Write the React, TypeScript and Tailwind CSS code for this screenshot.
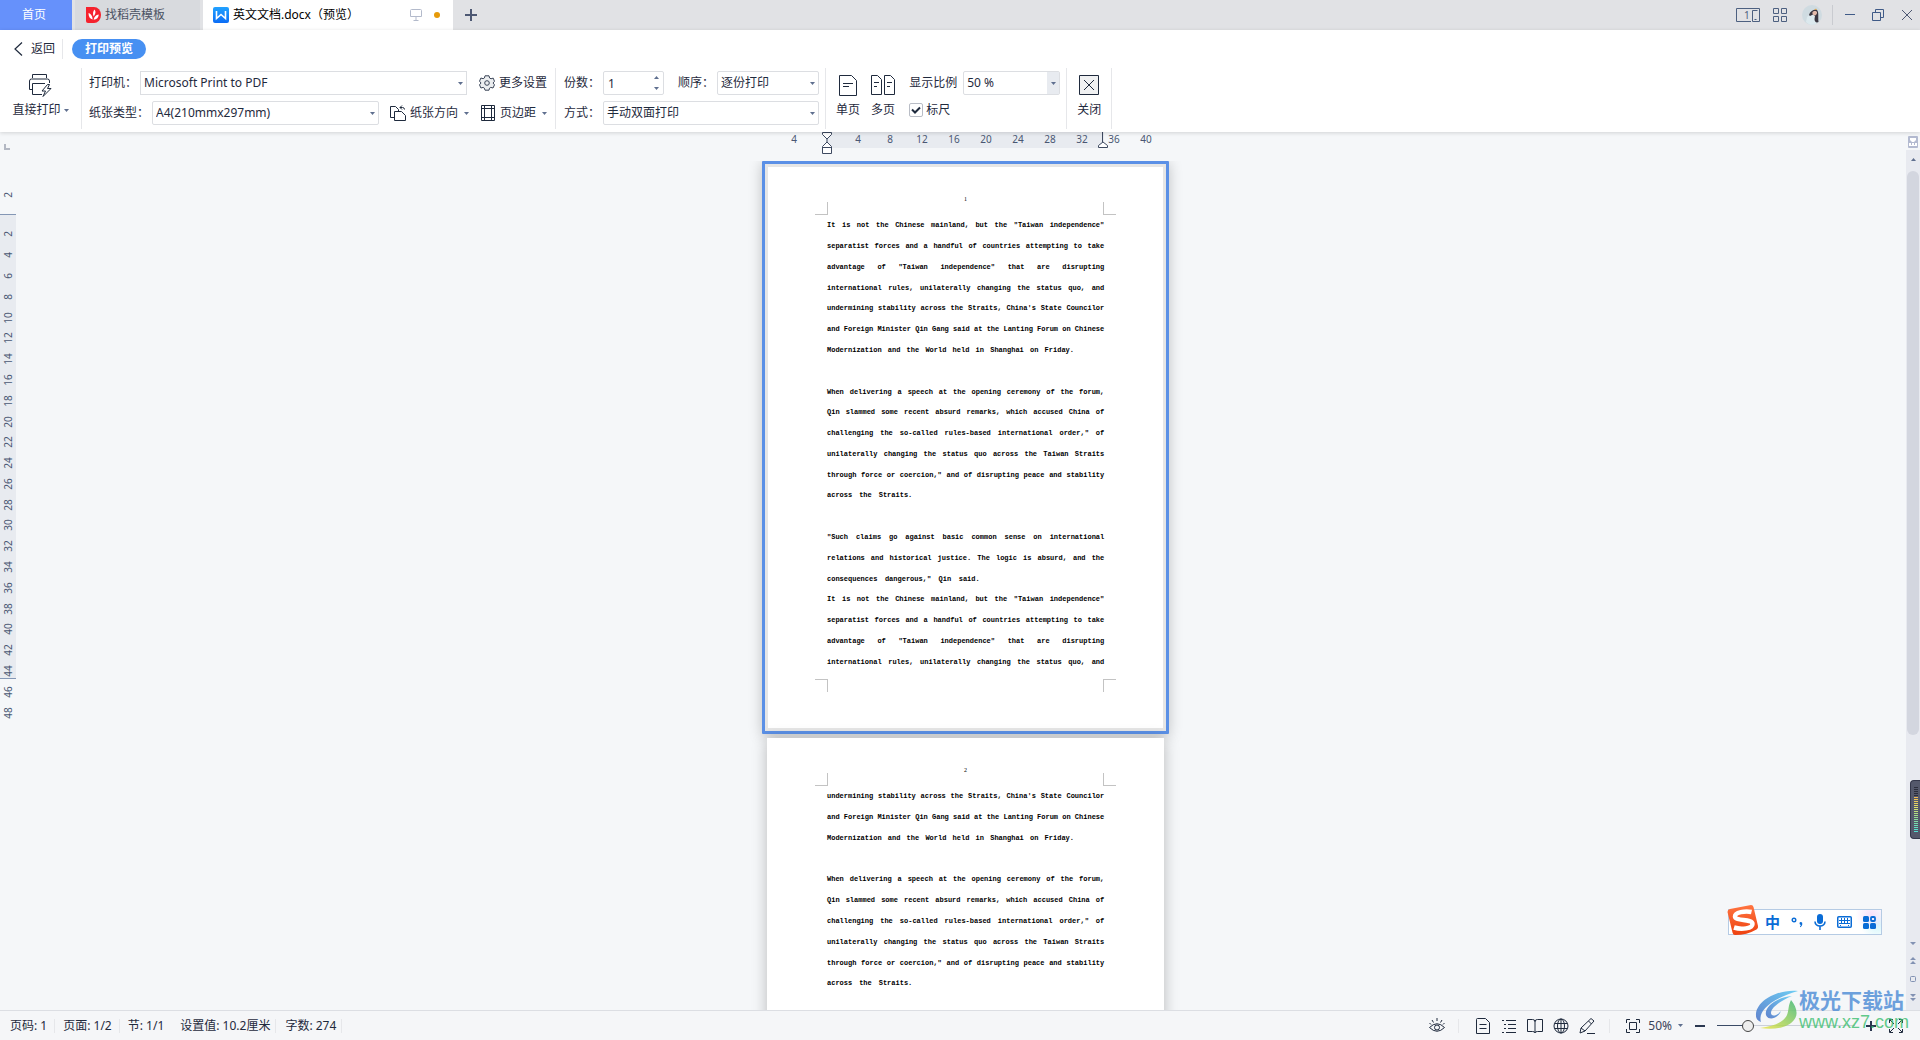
import { useState } from 'react';
import type { ReactNode } from 'react';
import clsx from 'clsx';

interface Line {
  text: string;
  last?: boolean;
}

const PARAGRAPH_ONE: Line[] = [
  { text: 'It is not the Chinese mainland, but the "Taiwan independence"' },
  { text: 'separatist forces and a handful of countries attempting to take' },
  { text: 'advantage of "Taiwan independence" that are disrupting' },
  { text: 'international rules, unilaterally changing the status quo, and' },
  { text: "undermining stability across the Straits, China's State Councilor" },
  { text: 'and Foreign Minister Qin Gang said at the Lanting Forum on Chinese' },
  { text: 'Modernization and the World held in Shanghai on Friday.', last: true },
];

const PARAGRAPH_TWO: Line[] = [
  { text: 'When delivering a speech at the opening ceremony of the forum,' },
  { text: 'Qin slammed some recent absurd remarks, which accused China of' },
  { text: 'challenging the so-called rules-based international order," of' },
  { text: 'unilaterally changing the status quo across the Taiwan Straits' },
  { text: 'through force or coercion," and of disrupting peace and stability' },
  { text: 'across the Straits.', last: true },
];

const PARAGRAPH_THREE: Line[] = [
  { text: '"Such claims go against basic common sense on international' },
  { text: 'relations and historical justice. The logic is absurd, and the' },
  { text: 'consequences dangerous," Qin said.', last: true },
];

const BLANK: Line = { text: '' };

const PAGE_ONE: Line[] = [
  ...PARAGRAPH_ONE,
  BLANK,
  ...PARAGRAPH_TWO,
  BLANK,
  ...PARAGRAPH_THREE,
  ...PARAGRAPH_ONE.slice(0, 4),
];

const PAGE_TWO: Line[] = [...PARAGRAPH_ONE.slice(4), BLANK, ...PARAGRAPH_TWO];

const TOP_MARKS = ['4', '', '4', '8', '12', '16', '20', '24', '28', '32', '36', '40'];
const SIDE_MARKS = Array.from({ length: 24 }, (_, i) => (i + 1) * 2);

function Caret({ className }: { className?: string }): JSX.Element {
  return (
    <svg viewBox="0 0 5 3" className={clsx('h-[3px] w-[5px] shrink-0 fill-[#5f6f8f]', className)}>
      <path d="M0 0h5L2.500 3z" />
    </svg>
  );
}

function Divider({ className }: { className?: string }): JSX.Element {
  return <div className={clsx('w-px shrink-0 bg-[#e6e7ea]', className)} />;
}

interface FieldProps {
  id: string;
  label: string;
  value: string;
  width: string;
  square?: boolean;
  shaded?: boolean;
  colon?: boolean;
}

function SelectField({ id, label, value, width, square, shaded, colon = true }: FieldProps): JSX.Element {
  return (
    <div className="flex items-center gap-[3px]">
      <label htmlFor={id} className={clsx('whitespace-nowrap', !colon && 'mr-[3px]')}>
        {label}
        {colon && '：'}
      </label>
      <div className={clsx('relative', width)}>
        <select
          id={id}
          defaultValue={value}
          className={clsx(
            'block h-6 w-full appearance-none border border-[#dcdee2] bg-white pr-4 pl-[3px] text-[#1f2a3d]',
            !square && 'rounded-xs',
          )}
        >
          <option>{value}</option>
        </select>
        <span
          className={clsx(
            'pointer-events-none absolute inset-y-px right-px flex w-3 items-center justify-center',
            shaded && 'bg-[#e8ebf0]',
          )}
        >
          <Caret />
        </span>
      </div>
    </div>
  );
}

function IconButton({ icon, label, caret }: { icon: ReactNode; label: string; caret?: boolean }): JSX.Element {
  return (
    <button type="button" className="flex h-6 items-center gap-1 whitespace-nowrap">
      {icon}
      {label}
      {caret && <Caret className="ml-[2px]" />}
    </button>
  );
}

function StackButton({ icon, label, caret }: { icon: ReactNode; label: string; caret?: boolean }): JSX.Element {
  return (
    <button type="button" className="flex flex-col items-center gap-[5px] whitespace-nowrap">
      <span className="flex h-6 items-center">{icon}</span>
      <span className="flex items-center gap-[3px] leading-4">
        {label}
        {caret && <Caret />}
      </span>
    </button>
  );
}

function TitleBar(): JSX.Element {
  return (
    <header className="flex h-[30px] shrink-0 items-stretch bg-[#e1e2e5]">
      <button type="button" className="w-[72px] bg-[#6691fb] pr-1 text-white">
        首页
      </button>
      <button type="button" className="ml-[3px] flex w-[125px] items-center gap-1 bg-[#d8dade] pl-[11px] text-[#4b5263]">
        <svg viewBox="0 0 15 16" className="h-4 w-[15px]">
          <path d="M0 0h8a7 8 0 0 1 0 16H2a2 2 0 0 1-2-2z" fill="#f5222d" />
          <path
            d="M8.500 2.500c2 2.500.5 5-.8 7C6.500 7 7 4 8.500 2.500zM2.500 6c2.400.5 4 3 4.200 6.500C4 12 2.500 9.500 2.500 6zM12.800 7.500c-.2 3-2 5-5.200 5.300.5-3 2.200-4.800 5.200-5.300z"
            fill="#fff"
          />
        </svg>
        找稻壳模板
      </button>
      <div className="ml-[3px] flex w-[250px] items-center bg-white pl-[10px] text-black">
        <svg viewBox="0 0 16 16" className="size-4">
          <defs>
            <linearGradient id="writer" x1="0" y1="0" x2="0" y2="1">
              <stop offset="0" stopColor="#22a2ff" />
              <stop offset="1" stopColor="#0b6cf5" />
            </linearGradient>
          </defs>
          <rect width="16" height="16" rx="2" fill="url(#writer)" />
          <path d="M3.500 4v7.500L8 7.500l4.500 4V4" fill="none" stroke="#fff" strokeWidth="1.600" />
        </svg>
        <span className="ml-1 flex-1 whitespace-nowrap">英文文档.docx（预览）</span>
        <svg viewBox="0 0 12 12" className="size-3 fill-none stroke-[#b3bacb]">
          <path d="M.5 1.500a1 1 0 0 1 1-1h9a1 1 0 0 1 1 1v6h-11zM6 8v3M3.500 11.500h5" />
        </svg>
        <span className="mr-[13px] ml-3 size-[6px] rounded-full bg-[#e69a09]" />
      </div>
      <button type="button" aria-label="新建标签" className="ml-3 flex items-center">
        <svg viewBox="0 0 12 12" className="size-3 stroke-[#4d5873] stroke-2">
          <path d="M6 0v12M0 6h12" />
        </svg>
      </button>
      <div className="ml-auto flex items-center pr-2">
        <button type="button" aria-label="窗口布局">
          <svg viewBox="0 0 24 14" className="h-[14px] w-6 fill-none stroke-[#4d6080]">
            <path d="M15 13.500H.5V.5h23v13h-7V2.500h5M18.500 11.500h2" />
            <text x="8" y="11" fill="#4d6080" stroke="none" fontSize="10">
              1
            </text>
          </svg>
        </button>
        <button type="button" aria-label="应用" className="ml-[13px]">
          <svg viewBox="0 0 14 14" className="size-[14px] fill-none stroke-[#4d6080]">
            <path d="M.5.5h5v5h-5zM8.500.5h5v5h-5zM.5 8.500h5v5h-5zM8.500 8.500h5v5h-5z" />
          </svg>
        </button>
        <button type="button" aria-label="账号" className="ml-[15px]">
          <svg viewBox="0 0 20 20" className="size-5">
            <circle cx="10" cy="10" r="10" fill="#cfdbe1" />
            <path d="M5 12c2-3 6-4 8-1l1 8c-3 1.500-7 1-10-2z" fill="#dce9ee" />
            <path d="M7 10c1-4 5-6 8-5 2 2 1 7 1.500 12-2 1-4 0-4-3l.5-3-2-1.500L8 11z" fill="#3a3640" />
            <path d="M10.500 7c1-1.500 4-1.500 4.500 0s-1 3.500-2.500 3.500S10 8.500 10.500 7z" fill="#e3b9a9" />
            <path d="M12 5l2-1.500L15 5z" fill="#d7a24f" />
          </svg>
        </button>
        <Divider className="ml-[10px] h-5 !bg-[#c9cbd0]" />
        <button type="button" aria-label="最小化" className="ml-3">
          <svg viewBox="0 0 10 10" className="size-[10px] stroke-[#3f5a87]">
            <path d="M0 4.500h10" />
          </svg>
        </button>
        <button type="button" aria-label="还原" className="ml-[17px]">
          <svg viewBox="0 0 12 12" className="size-3 fill-none stroke-[#3f5a87]">
            <path d="M.5 3.500h8v8h-8zM3.500 3V.5h8v8H9" />
          </svg>
        </button>
        <button type="button" aria-label="关闭窗口" className="ml-[18px]">
          <svg viewBox="0 0 10 10" className="size-[10px] stroke-[#4d5873]">
            <path d="M0 0l10 10M10 0L0 10" />
          </svg>
        </button>
      </div>
    </header>
  );
}

function Ribbon(): JSX.Element {
  const [copies, setCopies] = useState('1');
  const [ruler, setRuler] = useState(true);

  return (
    <div className="relative z-10 shrink-0 bg-white shadow-[0_1px_4px_rgba(0,0,0,0.15)]">
      <div className="flex h-[38px] items-center pl-[14px]">
        <button type="button" className="flex items-center gap-2">
          <svg viewBox="0 0 9 14" className="h-[14px] w-[9px] fill-none stroke-[#1f2a3d]">
            <path d="M8 .5L1 7l7 6.500" strokeWidth="1.200" />
          </svg>
          返回
        </button>
        <Divider className="mr-[9px] ml-[7px] h-5" />
        <button type="button" className="h-5 w-[74px] rounded-full bg-[#4790f2] font-bold text-white">
          打印预览
        </button>
      </div>

      <div className="flex h-16 items-stretch pb-[3px]">
        <div className="flex w-[81px] justify-center pt-[5px]">
          <StackButton
            caret
            label="直接打印"
            icon={
              <svg viewBox="0 0 24 24" className="size-6 fill-none stroke-[#1f2a3d]">
                <path d="M4.500 5V1.500h14V5M4 16.500H1.500V8a2 2 0 0 1 2-2h16a2 2 0 0 1 2 2v2M14 21.500H4.500v-11H17" />
                <path d="M19.500 11.500l-5.500 6.500h3.500l-2.500 5.500 8-8h-3.500l2-4z" />
              </svg>
            }
          />
        </div>
        <Divider />

        <div className="flex flex-col gap-[6px] pt-[3px] pr-2 pl-[7px]">
          <div className="flex items-center justify-between gap-3">
            <SelectField id="printer" label="打印机" value="Microsoft Print to PDF" width="w-[327px]" square />
            <IconButton
              label="更多设置"
              icon={
                <svg viewBox="0 0 16 16" className="size-4 fill-[#eceef0] stroke-[#3b4558]">
                  <path d="M6 .8h4l.6 2.200 1.400.8 2.200-.7 1.300 3.200L14 8l1.500 1.800-1.500 3.200-2.200-.6-1.300.8-.5 2H6l-.6-2-1.300-.8-2.200.6L.5 9.800 2 8 .5 6.200 1.900 3l2.200.7L5.400 3z" />
                  <circle cx="8" cy="8" r="2.300" />
                </svg>
              }
            />
          </div>
          <div className="flex items-center gap-[11px]">
            <SelectField id="paper" label="纸张类型" value="A4(210mmx297mm)" width="w-[227px]" />
            <IconButton
              caret
              label="纸张方向"
              icon={
                <svg viewBox="0 0 16 16" className="size-4 fill-none stroke-[#1f2a3d]">
                  <path d="M4.500 12.500h-4V1.500h5l3 3v2" />
                  <path d="M4.500 15.500v-9h7l4 4v5zM10 2.500h2.500a2 2 0 0 1 2 2M12 .5l-2 2 2 2" />
                </svg>
              }
            />
            <IconButton
              caret
              label="页边距"
              icon={
                <svg viewBox="0 0 16 16" className="size-4 fill-none stroke-[#1f2a3d]">
                  <path d="M1.500.5h13v15h-13zM4.500.5v15M11.500.5v15M1.500 3.500h13M1.500 12.500h13" />
                </svg>
              }
            />
          </div>
        </div>
        <Divider />

        <div className="flex flex-col gap-[6px] pt-[3px] pr-[6px] pl-2">
          <div className="flex items-center justify-between">
            <div className="flex items-center gap-[3px]">
              <label htmlFor="copies">份数：</label>
              <div className="relative w-[61px]">
                <input
                  id="copies"
                  value={copies}
                  onChange={(e) => setCopies(e.target.value)}
                  className="block h-6 w-full rounded-xs border border-[#dcdee2] pl-1 text-[#1f2a3d]"
                />
                <span className="absolute inset-y-[5px] right-[5px] flex flex-col justify-between">
                  <Caret className="rotate-180" />
                  <Caret />
                </span>
              </div>
            </div>
            <SelectField id="order" label="顺序" value="逐份打印" width="w-[102px]" />
          </div>
          <SelectField id="mode" label="方式" value="手动双面打印" width="w-[216px]" />
        </div>
        <Divider />

        <div className="flex gap-[11px] pt-[5px] pl-[10px]">
          <StackButton
            label="单页"
            icon={
              <svg viewBox="0 0 18 21" className="h-[21px] w-[18px] fill-none stroke-[#1f2a3d]">
                <path d="M.5.5h12l5 5v15H.5zM4 8.500h10M4 11.500h6" />
              </svg>
            }
          />
          <StackButton
            label="多页"
            icon={
              <svg viewBox="0 0 24 21" className="h-[21px] w-6 fill-none stroke-[#1f2a3d]">
                <path d="M.5.5h6l4 4v15H.5zM13.500.5h6l4 4v15h-10zM3 7.500h5M3 11.500h3M16 7.500h5M16 11.500h3" />
              </svg>
            }
          />
        </div>
        <div className="flex flex-col gap-[6px] pt-[3px] pr-[6px] pl-[14px]">
          <SelectField id="zoom" label="显示比例" value="50 %" width="w-[97px]" shaded colon={false} />
          <label className="flex h-[18px] items-center gap-[3px]">
            <span className="relative flex">
              <input
                type="checkbox"
                checked={ruler}
                onChange={(e) => setRuler(e.target.checked)}
                className="size-[14px] appearance-none rounded-xs border border-[#b9bdc6] bg-white"
              />
              {ruler && (
                <svg viewBox="0 0 14 14" className="pointer-events-none absolute inset-0 size-[14px] fill-none stroke-[#1f2a3d] stroke-2">
                  <path d="M3 6.500l3 3L11 4.500" />
                </svg>
              )}
            </span>
            标尺
          </label>
        </div>
        <Divider />
        <div className="flex px-[10px] pt-[5px]">
          <StackButton
            label="关闭"
            icon={
              <svg viewBox="0 0 20 20" className="size-5 stroke-[#1f2a3d]">
                <path d="M.5.5h19v19H.5z" fill="#f0f1f2" />
                <path d="M5 5l10 10M15 5L5 15" />
              </svg>
            }
          />
        </div>
        <Divider />
      </div>
    </div>
  );
}

function PageSheet({ number, lines }: { number: number; lines: Line[] }): JSX.Element {
  return (
    <div className="h-[561px] bg-white text-black">
      <div className="flex h-[47px] items-end justify-center pb-[11px] font-['Liberation_Serif',serif] text-[6px] leading-[8px]">
        {number}
      </div>
      <div className="relative mx-auto h-[466px] w-[277px] pt-px">
        <span className="absolute -top-3 -left-3 size-[13px] border-r border-b border-[#c3c3c3]" />
        <span className="absolute -top-3 -right-3 size-[13px] border-b border-l border-[#c3c3c3]" />
        <span className="absolute -bottom-3 -left-3 size-[13px] border-t border-r border-[#c3c3c3]" />
        <span className="absolute -right-3 -bottom-3 size-[13px] border-t border-l border-[#c3c3c3]" />
        <div className="grid h-[457px] grid-rows-[repeat(22,1fr)] items-center font-['Liberation_Mono',monospace] text-[7px] leading-[10px] font-bold whitespace-nowrap">
          {lines.map((line, i) => (
            <p
              key={i}
              className="[text-align-last:justify]"
              style={line.last ? { width: `${line.text.length * 1.62}%` } : undefined}
            >
              {line.text}
            </p>
          ))}
        </div>
      </div>
    </div>
  );
}

function TopRuler(): JSX.Element {
  return (
    <div className="relative mx-auto h-[29px] w-[407px] shrink-0 pl-16">
      <div className="h-4 w-[278px] bg-[#e8ebf0]" />
      <div className="absolute top-0 left-4 flex text-[10px] leading-[14px] text-[#4a5773]">
        {TOP_MARKS.map((mark, i) => (
          <span key={i} className="w-8 text-center">
            {mark}
          </span>
        ))}
      </div>
      <svg viewBox="0 0 10 22" className="absolute top-0 left-[60px] h-[22px] w-[10px] fill-white stroke-[#3e4a61]">
        <path d="M.5.5h9v2L5 7 .5 2.500zM5 10l4.500 4.500v7h-9v-7zM.5 15.500h9M5 7v3" />
      </svg>
      <svg viewBox="0 0 10 16" className="absolute top-0 left-[336px] h-4 w-[10px] fill-white stroke-[#3e4a61]">
        <path d="M4.500 0v10M5 10l4.500 3.500v2h-9v-2z" />
      </svg>
    </div>
  );
}

function SideRuler(): JSX.Element {
  return (
    <div className="relative w-[25px] shrink-0 text-[10px] text-[#4a5773]">
      <svg viewBox="0 0 6 6" className="mt-3 ml-1 size-[6px] fill-none stroke-[#b3b8c3] stroke-2">
        <path d="M1 0v5h5" />
      </svg>
      <div className="flex h-16 w-4 items-center justify-center pt-[26px]">
        <span className="-rotate-90">2</span>
      </div>
      <div className="h-[465px] w-4 border-y border-[#8497b5] bg-[#e8ebf0]" />
      <div className="absolute top-[92px] left-0 grid h-[499px] w-4 grid-rows-[repeat(24,1fr)] place-items-center leading-none">
        {SIDE_MARKS.map((mark) => (
          <span key={mark} className="-rotate-90">
            {mark}
          </span>
        ))}
      </div>
    </div>
  );
}

function ScrollBar(): JSX.Element {
  return (
    <div className="relative flex w-[14px] shrink-0 flex-col items-center">
      <svg viewBox="0 0 10 12" className="mt-1 mb-[2px] h-3 w-[10px]">
        <rect width="10" height="12" rx="1" fill="#b3bad0" />
        <path d="M2 2h6v2L6 6H4L2 4zM1 7h2v2h1V7h2v2h1V7h2v3H1z" fill="#fff" />
      </svg>
      <div className="flex w-full flex-1 flex-col items-center bg-[#e8eaf0] pt-2 pb-2">
        <Caret className="rotate-180" />
        <div className="mt-[10px] h-[564px] w-3 rounded-full bg-[#d3d6df]" />
        <svg viewBox="0 0 6 62" className="mt-auto h-[62px] w-[6px] fill-[#8292b3]">
          <path d="M0 2h6L3 5zM3 17l3 3H0zM3 21l3 3H0z" />
          <rect x=".5" y="36.500" width="5" height="5" rx="1" fill="none" stroke="#8292b3" />
          <path d="M0 54h6L3 57zM0 58h6L3 61z" />
        </svg>
      </div>
      <div className="absolute top-[648px] right-0 flex h-[59px] w-[10px] flex-col items-end rounded-l-sm border border-r-0 border-[#34374a] bg-[#54586b] pt-[6px] pr-[2px]">
        <div className="h-[45px] w-1 bg-[repeating-linear-gradient(to_bottom,transparent_0_1px,#54586b_1px_2px),linear-gradient(to_bottom,#2b2d3b_0_20%,#f2b950_22%,#dfe26a_45%,#8fdc96_70%,#4fe0d5)]" />
      </div>
    </div>
  );
}

function InputMethodBar(): JSX.Element {
  return (
    <div className="absolute right-[38px] bottom-[105px] z-10 flex h-[26px] w-[154px] items-center border border-[#b5cbe4] bg-white text-[#0a6cd6]">
      <svg viewBox="0 0 32 32" className="-mt-1 -ml-[2px] size-8 shrink-0">
        <defs>
          <linearGradient id="ime" x1="0" y1="0" x2="0" y2="1">
            <stop offset="0" stopColor="#ff7440" />
            <stop offset="1" stopColor="#ee4210" />
          </linearGradient>
        </defs>
        <path d="M3 5L24 1q2 0 2.500 2L31 22q.5 2-1.500 3.500Q20 31 8 31q-2 0-2.500-2.500L.5 8Q.5 5.500 3 5z" fill="url(#ime)" />
        <path
          d="M24.500 8C18 6.500 8 8.500 8 12.500c0 5 17.500 2 17.500 7.500 0 4.500-11 6-18.500 3.500"
          fill="none"
          stroke="#fff"
          strokeWidth="4.500"
        />
      </svg>
      <div className="flex flex-1 items-center justify-between self-stretch bg-[radial-gradient(circle_at_92%_20%,#f8e0fa,transparent_14%),radial-gradient(circle_at_97%_60%,#d3f6fb,transparent_14%)] pr-[5px] pl-[6px]">
        <button type="button" className="text-[15px] leading-none font-bold">
          中
        </button>
        <button type="button" aria-label="标点">
          <svg viewBox="0 0 12 12" className="size-3">
            <circle cx="3" cy="4" r="1.800" fill="none" stroke="currentColor" strokeWidth="1.400" />
            <path d="M9.500 6a1.700 1.700 0 0 1 1.800 2c0 1.600-1 2.700-2.300 3.200V10c.6-.3.9-.6.9-1.100A1.500 1.500 0 0 1 9.500 6z" fill="currentColor" />
          </svg>
        </button>
        <button type="button" aria-label="语音">
          <svg viewBox="0 0 12 16" className="h-4 w-3">
            <rect x="3" width="6" height="10" rx="3" fill="currentColor" />
            <path d="M1 7.500c0 6 10 6 10 0M6 12v4" fill="none" stroke="currentColor" strokeWidth="1.600" />
          </svg>
        </button>
        <button type="button" aria-label="键盘">
          <svg viewBox="0 0 15 12" className="h-3 w-[15px]">
            <rect x=".75" y=".75" width="13.500" height="10.500" rx="1" fill="#fff" stroke="currentColor" strokeWidth="1.500" />
            <path d="M2 4.500h11M2 7.500h11M4.500 2v5.500M7.500 2v5.500M10.500 2v5.500M3 9.500h1M11 9.500h1" stroke="currentColor" />
          </svg>
        </button>
        <button type="button" aria-label="工具箱">
          <svg viewBox="0 0 13 13" className="size-[13px] fill-current">
            <rect width="6" height="6" rx="1.500" />
            <rect x="8" y="1" width="4" height="4" rx="1" fill="none" stroke="currentColor" strokeWidth="1.800" />
            <rect y="7" width="6" height="6" rx="1.500" />
            <rect x="7" y="7" width="6" height="6" rx="1.500" />
          </svg>
        </button>
      </div>
    </div>
  );
}

function ViewIcon({ label, children }: { label: string; children: ReactNode }): JSX.Element {
  return (
    <button type="button" aria-label={label}>
      <svg viewBox="0 0 16 16" className="size-4 fill-none stroke-[#1f2a3d]">
        {children}
      </svg>
    </button>
  );
}

function StatusBar(): JSX.Element {
  return (
    <footer className="flex h-[30px] shrink-0 items-center border-t border-[#dcdee3] bg-[#f5f6f8] whitespace-nowrap">
      <div className="flex items-center pl-[10px]">
        <span>页码: 1</span>
        <Divider className="mr-2 ml-[7px] h-[14px]" />
        <span>页面: 1/2</span>
        <Divider className="mr-2 ml-[7px] h-[14px]" />
        <span>节: 1/1</span>
        <span className="mr-[5px] ml-4">设置值: 10.2厘米</span>
        <Divider className="mr-[9px] h-[14px]" />
        <span>字数: 274</span>
        <Divider className="ml-[5px] h-[14px]" />
      </div>

      <div className="ml-auto flex items-center pr-4">
        <ViewIcon label="护眼模式">
          <path d="M.5 9.500Q8 2 15.500 9.500 8 17 .5 9.500zM8 0v3M3 2l1.500 2.500M13 2l-1.500 2.500M.5 5L2 6.500M15.500 5L14 6.500" />
          <circle cx="8" cy="9.500" r="2.500" />
        </ViewIcon>
        <Divider className="mr-4 ml-[13px] h-[14px]" />
        <div className="flex items-center gap-[10px]">
          <ViewIcon label="页面视图">
            <path d="M1.500 1.500a1 1 0 0 1 1-1h8l4 4v11h-13zM4.500 6.500h7M4.500 10.500h7" />
          </ViewIcon>
          <ViewIcon label="大纲">
            <path d="M1 2.500h2M5 2.500h10M3 6.500h2M7 6.500h8M3 10.500h2M7 10.500h8M1 14.500h2M5 14.500h10" />
          </ViewIcon>
          <ViewIcon label="阅读版式">
            <path d="M8 2.500v12M.5 1.500h5Q8 1.500 8 3.500q0-2 2.500-2h5v12h-5Q8 13.500 8 15q0-1.500-2.500-1.500h-5z" />
          </ViewIcon>
          <ViewIcon label="Web版式">
            <circle cx="8" cy="8" r="7" />
            <ellipse cx="8" cy="8" rx="3.500" ry="7" />
            <path d="M8 1v14M1.500 5.500h13M1.500 10.500h13" />
          </ViewIcon>
          <ViewIcon label="写作模式">
            <path d="M2 10L12 .5l3 2.500-9 10-5 2zM2 10l4 3M9.500 3l3 3M8 15.500h8" />
          </ViewIcon>
        </div>
        <Divider className="mr-[15px] ml-[14px] h-[14px]" />
        <ViewIcon label="最佳显示比例">
          <path d="M1.500 5V1.500H5M11 1.500h3.500V5M14.500 11v3.500H11M5 14.500H1.500V11M4.500 4.500h7v7h-7z" />
        </ViewIcon>
        <button type="button" className="ml-[7px] flex items-center gap-[6px] text-[#3a4358]">
          50%
          <Caret />
        </button>
        <button type="button" aria-label="缩小" className="ml-3 h-[2px] w-[10px] bg-[#2b3750]" />
        <input
          type="range"
          aria-label="缩放"
          defaultValue={20}
          className="mr-[11px] ml-3 h-3 w-[138px] appearance-none bg-[linear-gradient(to_right,#3a4a66_20%,#ccd0d9_20%)] bg-[length:100%_1px] bg-center bg-no-repeat [&::-webkit-slider-thumb]:size-3 [&::-webkit-slider-thumb]:appearance-none [&::-webkit-slider-thumb]:rounded-full [&::-webkit-slider-thumb]:border [&::-webkit-slider-thumb]:border-[#444] [&::-webkit-slider-thumb]:bg-[#eee]"
        />
        <button type="button" aria-label="放大">
          <svg viewBox="0 0 10 10" className="size-[10px] stroke-[#2b3750] stroke-2">
            <path d="M5 0v10M0 5h10" />
          </svg>
        </button>
        <div className="ml-3 flex">
          <ViewIcon label="全屏">
            <path d="M1.500 5V1.500H5M11 1.500h3.500V5M14.500 11v3.500H11M5 14.500H1.500V11M2 2l4 4M14 2l-4 4M2 14l4-4M14 14l-4-4" />
          </ViewIcon>
        </div>
      </div>
    </footer>
  );
}

function Watermark(): JSX.Element {
  return (
    <div className="pointer-events-none absolute right-[11px] bottom-2 z-20 flex items-center opacity-80">
      <svg viewBox="0 0 44 42" className="h-[42px] w-11">
        <defs>
          <linearGradient id="aurora-blue" x1="1" y1="0" x2="0" y2="1">
            <stop offset="0" stopColor="#4cc3f3" />
            <stop offset="1" stopColor="#3c68c4" />
          </linearGradient>
          <linearGradient id="aurora-green" x1="1" y1="0" x2="0" y2="1">
            <stop offset="0" stopColor="#35b56f" />
            <stop offset="1" stopColor="#f1e63c" />
          </linearGradient>
        </defs>
        <path d="M43 2C21 0 0 13 1 27c0 3 2 5 5 6-3-9 6-22 37-31z" fill="url(#aurora-blue)" />
        <path d="M37 7C22 8 9 18 11 26c2 6 12 4 15-4-4 5-10 6-10 2 0-6 11-13 21-17z" fill="url(#aurora-blue)" />
        <path d="M36 11c5 6 8 14 3 20-6 8-20 10-34 8 14-2 24-6 27-13 2-5 1-9 4-15z" fill="url(#aurora-green)" />
      </svg>
      <div className="flex flex-col whitespace-nowrap">
        <span className="text-[21px] leading-6 font-bold text-[#4a8bd6]">极光下载站</span>
        <span className="font-['Liberation_Sans',sans-serif] text-[18px] leading-5 text-[#3cbf70]">www.xz7.com</span>
      </div>
    </div>
  );
}

export default function App(): JSX.Element {
  return (
    <div className="relative flex h-screen flex-col overflow-hidden bg-[#f5f7f9] font-['Noto_Sans','Noto_Sans_CJK_SC',sans-serif] text-[12px] leading-4 text-[#1f2a3d]">
      <TitleBar />
      <Ribbon />
      <div className="flex min-h-0 flex-1">
        <SideRuler />
        <main className="flex min-w-0 flex-1 flex-col">
          <TopRuler />
          <div className="min-h-0 flex-1 overflow-hidden">
            <div className="mx-auto w-[407px] rounded-[1px] border-3 border-[#5b90e6] bg-[#e6e6e6] p-[3px] shadow-[0_2px_14px_rgba(0,0,0,0.22)]">
              <PageSheet number={1} lines={PAGE_ONE} />
            </div>
            <div className="mx-auto mt-1 w-[397px] shadow-[0_2px_14px_rgba(0,0,0,0.25)]">
              <PageSheet number={2} lines={PAGE_TWO} />
            </div>
          </div>
        </main>
        <ScrollBar />
      </div>
      <StatusBar />
      <InputMethodBar />
      <Watermark />
    </div>
  );
}
